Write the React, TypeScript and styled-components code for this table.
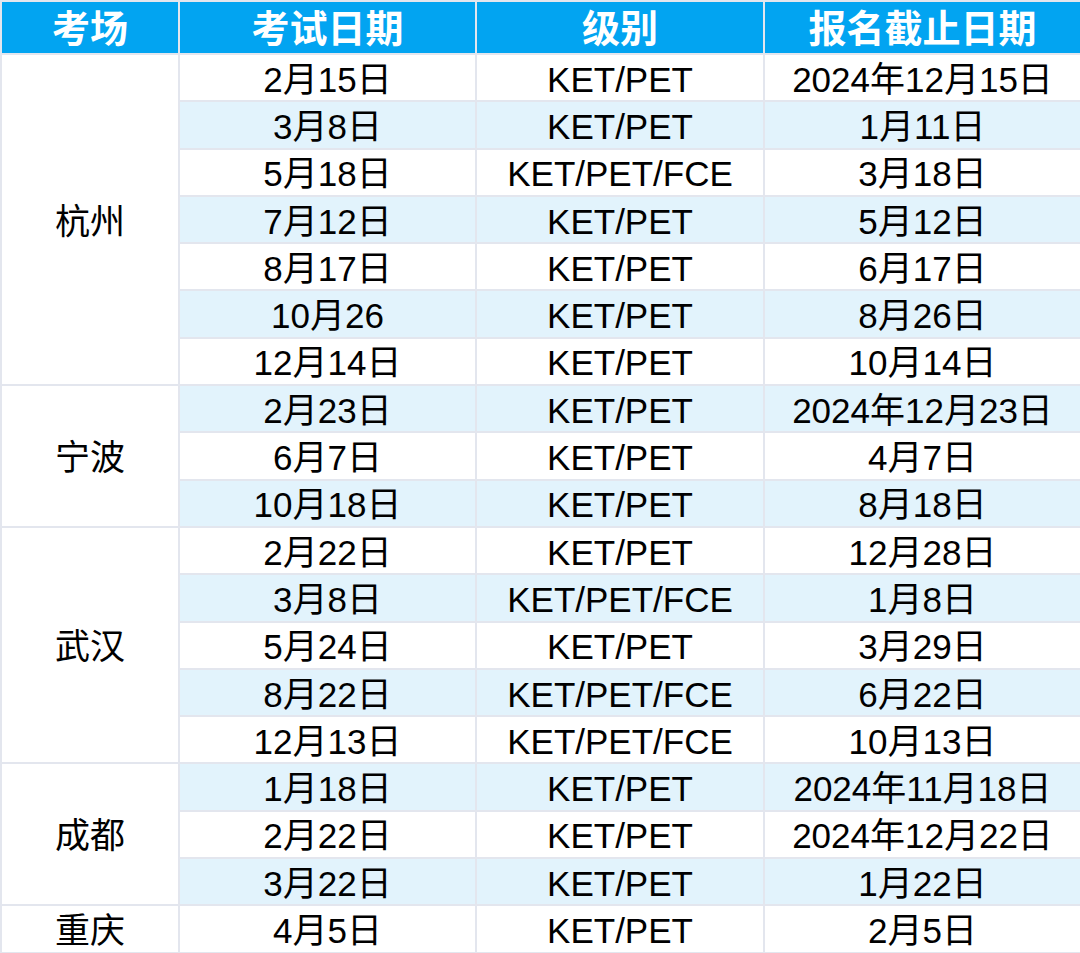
import React from 'react';
import styled, {createGlobalStyle} from 'styled-components';

const GlobalStyle = createGlobalStyle`
  html, body {
    margin: 0;
    padding: 0;
    background: #ffffff;
  }
  body {
    font-family: 'Liberation Sans', 'Noto Sans CJK SC', sans-serif;
  }
`;

type Session = {date: string; level: string; deadline: string};
type City = {name: string; sessions: Session[]};

const KP = 'KET/PET';
const KPF = 'KET/PET/FCE';

const cities: City[] = [
  {
    name: '杭州',
    sessions: [
      {date: '2月15日', level: KP, deadline: '2024年12月15日'},
      {date: '3月8日', level: KP, deadline: '1月11日'},
      {date: '5月18日', level: KPF, deadline: '3月18日'},
      {date: '7月12日', level: KP, deadline: '5月12日'},
      {date: '8月17日', level: KP, deadline: '6月17日'},
      {date: '10月26', level: KP, deadline: '8月26日'},
      {date: '12月14日', level: KP, deadline: '10月14日'},
    ],
  },
  {
    name: '宁波',
    sessions: [
      {date: '2月23日', level: KP, deadline: '2024年12月23日'},
      {date: '6月7日', level: KP, deadline: '4月7日'},
      {date: '10月18日', level: KP, deadline: '8月18日'},
    ],
  },
  {
    name: '武汉',
    sessions: [
      {date: '2月22日', level: KP, deadline: '12月28日'},
      {date: '3月8日', level: KPF, deadline: '1月8日'},
      {date: '5月24日', level: KP, deadline: '3月29日'},
      {date: '8月22日', level: KPF, deadline: '6月22日'},
      {date: '12月13日', level: KPF, deadline: '10月13日'},
    ],
  },
  {
    name: '成都',
    sessions: [
      {date: '1月18日', level: KP, deadline: '2024年11月18日'},
      {date: '2月22日', level: KP, deadline: '2024年12月22日'},
      {date: '3月22日', level: KP, deadline: '1月22日'},
    ],
  },
  {
    name: '重庆',
    sessions: [{date: '4月5日', level: KP, deadline: '2月5日'}],
  },
];

const App = () => {
  let rowIndex = 0;

  return (
    <>
      <GlobalStyle />
      <ScheduleTable>
        <colgroup>
          <col style={{width: 178}} />
          <col style={{width: 297}} />
          <col style={{width: 288}} />
          <col style={{width: 317}} />
        </colgroup>
        <thead>
          <tr>
            <HeaderCell>考场</HeaderCell>
            <HeaderCell>考试日期</HeaderCell>
            <HeaderCell>级别</HeaderCell>
            <HeaderCell>报名截止日期</HeaderCell>
          </tr>
        </thead>
        <tbody>
          {cities.map((city) =>
            city.sessions.map((s, i) => {
              const striped = rowIndex % 2 === 1;
              rowIndex += 1;
              return (
                <BodyRow key={`${city.name}-${i}`}>
                  {i === 0 && <CityCell rowSpan={city.sessions.length}>{city.name}</CityCell>}
                  <DataCell $striped={striped}>{s.date}</DataCell>
                  <DataCell $striped={striped}>{s.level}</DataCell>
                  <DataCell $striped={striped}>{s.deadline}</DataCell>
                </BodyRow>
              );
            }),
          )}
        </tbody>
      </ScheduleTable>
    </>
  );
};

export default App;

const ScheduleTable = styled.table`
  width: 1080px;
  table-layout: fixed;
  border-collapse: collapse;
  font-family: 'Liberation Sans', 'Noto Sans CJK SC', sans-serif;
`;

const HeaderCell = styled.th`
  height: 48px;
  padding: 3px 0 0 0;
  background-color: #02a4f1;
  color: #ffffff;
  font-size: 38px;
  font-weight: 700;
  text-align: center;
  vertical-align: middle;
  border: 2px solid #e3e6ee;
  line-height: 1;
`;

const BodyRow = styled.tr`
  height: 47.3px;
`;

const DataCell = styled.td<{$striped: boolean}>`
  padding: 3px 0 0 0;
  background-color: ${(p) => (p.$striped ? '#e2f3fc' : '#ffffff')};
  color: #000000;
  font-size: 35px;
  text-align: center;
  vertical-align: middle;
  border: 2px solid #e3e6ee;
  line-height: 1;
  white-space: nowrap;
`;

const CityCell = styled.td`
  padding: 3px 0 0 0;
  background-color: #ffffff;
  color: #000000;
  font-size: 35px;
  text-align: center;
  vertical-align: middle;
  border: 2px solid #e3e6ee;
  line-height: 1;
`;
